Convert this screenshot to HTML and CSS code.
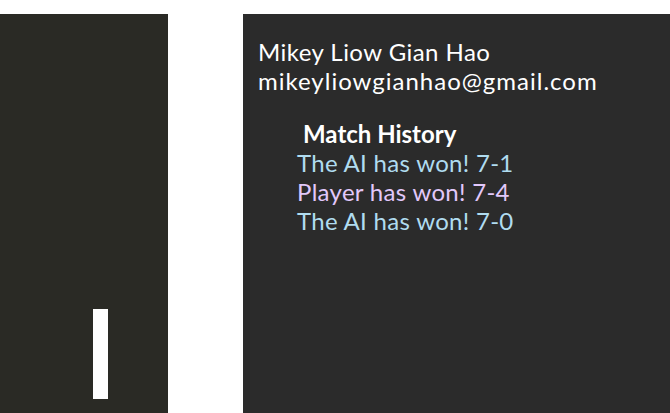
FILE: index.html
```html
<!DOCTYPE html>
<html>
<head>
<meta charset="utf-8">
<link rel="stylesheet" href="styles.css">
</head>
<body>
<div class="page">
  <div class="game">
    <div class="paddle"></div>
  </div>
  <div class="profile">
    <div class="name">Mikey Liow Gian Hao</div>
    <div class="email">mikeyliowgianhao@gmail.com</div>
    <h3 class="history-title">Match History</h3>
    <ul class="history">
      <li class="ai">The AI has won! 7-1</li>
      <li class="player">Player has won! 7-4</li>
      <li class="ai">The AI has won! 7-0</li>
    </ul>
  </div>
</div>
</body>
</html>
```
FILE: styles.css
```css
html, body {
  margin: 0;
  padding: 0;
  background: #ffffff;
  overflow: hidden;
}
.page {
  display: flex;
  gap: 75px;
  padding-top: 14px;
  height: 413px;
  box-sizing: border-box;
  font-family: Lato, "Open Sans", sans-serif;
  font-size: 24px;
  line-height: 29px;
  color: #ffffff;
}
.game {
  position: relative;
  width: 168px;
  background: #2a2a25;
  flex: none;
}
.paddle {
  position: absolute;
  left: 93px;
  top: 295px;
  width: 15px;
  height: 90px;
  background: #ffffff;
}
.profile {
  flex: 1;
  background: #2b2b2b;
  padding: 23px 15px 0;
}
.name {
  letter-spacing: 0.45px;
}
.email {
  letter-spacing: 1px;
}
.history-title {
  margin: 24px 0 0 45px;
  font-size: 24px;
  line-height: 29px;
  font-weight: bold;
}
.history {
  list-style: none;
  margin: 0;
  padding: 0 0 0 39px;
  letter-spacing: 0.3px;
}
.ai { color: #b0dcf0; }
.player { color: #e2c8fb; }
```
